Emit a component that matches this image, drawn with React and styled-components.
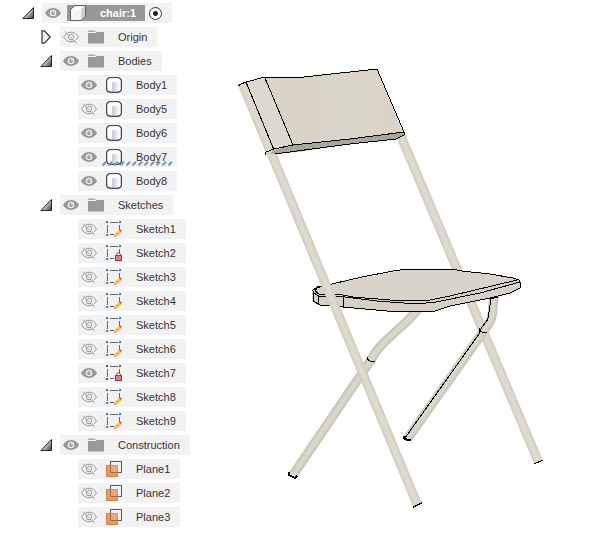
import React, { useState } from "react";
import styled, { createGlobalStyle } from "styled-components";

const GlobalStyle = createGlobalStyle`
  body {
    margin: 0;
    background: #fff;
    color: #333;
    font-family: "Liberation Sans", Arial, sans-serif;
    font-size: 11px;
  }
`;

const SWorkspace = styled.main`
  display: flex;
  align-items: flex-start;
`;

const SBrowser = styled.nav`
  flex: 0 0 200px;
  padding-top: 3px;
`;

const STree = styled.ul`
  list-style: none;
  margin: 0;
  padding: 0 0 0 ${({ $root }) => ($root ? "22px" : "18px")};
  display: flex;
  flex-direction: column;
  gap: 4px;
`;

const SNode = styled.li`
  display: flex;
  flex-direction: column;
  gap: 4px;
`;

const SLine = styled.div`
  display: flex;
  align-items: center;
  gap: 8px;
`;

const SIconButton = styled.button`
  display: flex;
  align-items: center;
  flex: none;
  width: ${({ $width }) => $width};
  padding: 0;
  border: none;
  background: none;
  cursor: pointer;
`;

const STwistySlot = styled.span`
  flex: none;
  width: 12px;
`;

const SRow = styled.div`
  position: relative;
  display: flex;
  align-items: center;
  height: 20px;
  padding: 0 10px 0 3px;
  background: #f2f2f2;

  svg {
    display: block;
  }
`;

const SItem = styled.span`
  display: flex;
  align-items: center;
  gap: 14px;
  margin-left: 9px;
  white-space: nowrap;
`;

const SActiveItem = styled(SItem)`
  height: 16px;
  margin-left: 6px;
  padding: 0 9px 0 3px;
  background: #989898;
  color: #fff;
  font-weight: bold;
`;

const SRadio = styled.input`
  appearance: none;
  width: 13px;
  height: 13px;
  margin: 0 0 0 4px;
  border: 1px solid #333;
  border-radius: 100%;
  background: #fff;

  &:checked {
    background: radial-gradient(circle, #222 0 2px, #fff 3px);
  }
`;

const SHatch = styled.svg`
  position: absolute;
  left: 24px;
  bottom: 1px;
`;

const SViewport = styled.svg`
  display: block;
  flex: 1;
  min-width: 0;
  height: auto;
`;

const TwistyIcon = ({ open }) => (
  <svg width="12" height="14" viewBox="0 0 12 14" aria-hidden="true">
    <defs>
      <linearGradient id="twisty" x1="0.3" y1="0.3" x2="1" y2="0.9">
        <stop offset="0" stopColor="#fff" />
        <stop offset="1" stopColor="#444" />
      </linearGradient>
    </defs>
    {open ? (
      <path d="M11.5 1.5V12.5H.8Z" fill="url(#twisty)" stroke="#222" />
    ) : (
      <path d="M2 .8H4.5L10.2 7L4.5 13.2H2Z" fill="#eee" stroke="#333" strokeWidth="1.2" />
    )}
  </svg>
);

const EyeIcon = ({ visible }) => (
  <svg width="16" height="14" viewBox="0 0 16 14" aria-hidden="true">
    {visible ? (
      <>
        <path d="M0 7C3.5 .3 12.5 .3 16 7C12.5 13.7 3.5 13.7 0 7Z" fill="#999" />
        <circle cx="8" cy="7" r="2.6" fill="#999" stroke="#f4f4f4" strokeWidth="1.3" />
        <circle cx="8.6" cy="6.4" r=".7" fill="#ddd" />
      </>
    ) : (
      <g fill="none" stroke="#999">
        <path d="M.6 7C4 .6 12 .6 15.4 7C12 13.4 4 13.4 .6 7Z" />
        <circle cx="8" cy="7" r="2.8" />
        <path d="M3 1.3L14.2 12.6" stroke="#f2f2f2" />
        <path d="M2 1.5L13.7 13.3" />
      </g>
    )}
  </svg>
);

const FolderIcon = () => (
  <svg width="16" height="14" viewBox="0 0 16 14" aria-hidden="true">
    <path d="M0 1.5Q0 .5 1 .5H6.5L8 2H0Z" fill="#aaa" />
    <path d="M0 3H7.5L9 2H16V13.5H0Z" fill="#999" />
  </svg>
);

const ComponentIcon = () => (
  <svg width="16" height="16" viewBox="0 0 16 16" aria-hidden="true">
    <path d="M.6 4.3L5 .6H15.4V11.3L11 15.4H.6Z" fill="#fff" stroke="#555" strokeLinejoin="round" />
    <path d="M11.2 4.3L14.8 1V11L11.2 14.8Z" fill="#c8ccd4" />
    <path d="M1.3 4.5H11V14.7H1.3Z" fill="#f5f6f8" />
  </svg>
);

const BodyIcon = () => (
  <svg width="16" height="16" viewBox="0 0 16 16" aria-hidden="true">
    <defs>
      <linearGradient id="body">
        <stop offset="0" stopColor="#fff" />
        <stop offset=".33" stopColor="#fff" />
        <stop offset=".36" stopColor="#c6cbd4" />
        <stop offset=".9" stopColor="#fff" />
      </linearGradient>
    </defs>
    <path d="M.6 3.8Q1.4 .6 5.5 .6H10.5Q14.6 .6 15.4 3.8V12.2Q14.6 15.4 10.5 15.4H5.5Q1.4 15.4 .6 12.2Z" fill="url(#body)" stroke="#414856" strokeWidth="1.3" />
    <path d="M1.4 3.7Q2.2 1.3 5.5 1.3H10.5Q13.8 1.3 14.6 3.7Q13.5 5 11 5H5Q2.5 5 1.4 3.7Z" fill="#fff" />
  </svg>
);

const SketchIcon = ({ locked, shown }) => (
  <svg width="16" height="16" viewBox="0 0 16 16" aria-hidden="true">
    <path d="M4 1.5H12M1.5 4V12M13.5 4V9M4 13.5H8" stroke="#666" fill="none" />
    <g fill={shown ? "#555" : "#1687e0"}>
      <rect x="0" y="0" width="2" height="2" />
      <rect x="13" y="0" width="2" height="2" />
      <rect x="0" y="13" width="2" height="2" />
    </g>
    {locked ? (
      <>
        <path d="M10.5 10.5V9.5Q10.5 7.9 12.5 7.9Q14.5 7.9 14.5 9.5V10.5" fill="none" stroke="#b63a40" />
        <rect x="9.5" y="10.5" width="6" height="5" fill="#d98286" stroke="#c02832" />
      </>
    ) : (
      <>
        <path d="M8 15.8L8.8 12.8L13 9L15.4 11.2L11 15.2Z" fill="#f9bd4e" />
        <path d="M13 9.2Q14 8 15.4 8.8Q16 10 15.2 11.3Z" fill="#ee4848" />
        <path d="M8 15.8L8.5 14.2L9.6 15.4Z" fill="#888" />
      </>
    )}
  </svg>
);

const PlaneIcon = () => (
  <svg width="16" height="16" viewBox="0 0 16 16" aria-hidden="true">
    <rect x=".5" y="4.5" width="11" height="11" fill="#e69a62" stroke="#d98548" />
    <path d="M4.5 4.5H11.5V11.5H4.5Z" fill="#e2ab85" />
    <path d="M4.5 4V.5H15.5V11.5H12" fill="none" stroke="#555" />
    <path d="M4.5 4.5V11.5H11.5" fill="none" stroke="#a86d48" />
  </svg>
);

const icons = {
  folder: FolderIcon,
  component: ComponentIcon,
  body: BodyIcon,
  sketch: SketchIcon,
  plane: PlaneIcon,
};

const hatchMarks = Array.from({ length: 12 }, (_, index) => index * 6);

const body = (name, visible = true, hatched = false) => ({ name, icon: "body", visible, hatched });
const sketch = (name, visible = false, locked = false) => ({ name, icon: "sketch", visible, locked });
const plane = (name) => ({ name, icon: "plane", visible: false });

const model = {
  name: "chair:1",
  icon: "component",
  visible: true,
  active: true,
  open: true,
  children: [
    { name: "Origin", icon: "folder", visible: false, open: false, children: [] },
    {
      name: "Bodies",
      icon: "folder",
      visible: true,
      open: true,
      children: [body("Body1"), body("Body5", false), body("Body6"), body("Body7", true, true), body("Body8")],
    },
    {
      name: "Sketches",
      icon: "folder",
      visible: true,
      open: true,
      children: [
        sketch("Sketch1"),
        sketch("Sketch2", false, true),
        sketch("Sketch3"),
        sketch("Sketch4"),
        sketch("Sketch5"),
        sketch("Sketch6"),
        sketch("Sketch7", true, true),
        sketch("Sketch8"),
        sketch("Sketch9"),
      ],
    },
    {
      name: "Construction",
      icon: "folder",
      visible: true,
      open: true,
      children: [plane("Plane1"), plane("Plane2"), plane("Plane3")],
    },
  ],
};

const TreeNode = ({ node }) => {
  const [open, setOpen] = useState(node.open);
  const [visible, setVisible] = useState(node.visible);
  const Icon = icons[node.icon];
  const Item = node.active ? SActiveItem : SItem;

  return (
    <SNode>
      <SLine>
        {node.children ? (
          <SIconButton
            type="button"
            $width="12px"
            aria-label={`Expand ${node.name}`}
            aria-expanded={open}
            onClick={() => setOpen(!open)}
          >
            <TwistyIcon open={open} />
          </SIconButton>
        ) : (
          <STwistySlot />
        )}
        <SRow>
          <SIconButton
            type="button"
            $width="16px"
            aria-label={`Show ${node.name}`}
            aria-pressed={visible}
            onClick={() => setVisible(!visible)}
          >
            <EyeIcon visible={visible} />
          </SIconButton>
          <Item>
            <Icon locked={node.locked} shown={visible} />
            {node.name}
          </Item>
          {node.active && <SRadio type="radio" name="active" aria-label={`Activate ${node.name}`} defaultChecked />}
          {node.hatched && (
            <SHatch width="72" height="5" viewBox="0 0 72 5" aria-hidden="true">
              {hatchMarks.map((x) => (
                <path key={x} d={`M${x + 0.5} 4.5L${x + 4} .8`} stroke="#7f92b6" strokeWidth="2" />
              ))}
            </SHatch>
          )}
        </SRow>
      </SLine>
      {open && node.children?.length > 0 && (
        <STree>
          {node.children.map((child) => (
            <TreeNode key={child.name} node={child} />
          ))}
        </STree>
      )}
    </SNode>
  );
};

// tubes are layered strokes, darkest at the rim and lightest in the middle
const Tube = ({ d, dark }) => (
  <g fill="none">
    <path d={d} stroke={dark ? "#c6c3b9" : "#ceccc1"} strokeWidth="9.4" />
    <path d={d} stroke={dark ? "#d0cdc2" : "#d8d5c9"} strokeWidth="7" />
    <path d={d} stroke={dark ? "#d9d6ca" : "#dedace"} strokeWidth="4" />
  </g>
);

const Chair = () => (
  <SViewport viewBox="200 0 412 548" role="img" aria-label="Folding chair model">
    <defs>
      <linearGradient id="backrest">
        <stop offset="0" stopColor="#dbd4c8" />
        <stop offset=".35" stopColor="#d9d4c6" />
        <stop offset=".6" stopColor="#dad6ca" />
        <stop offset="1" stopColor="#dad3c7" />
      </linearGradient>
    </defs>

    <Tube d="M400 134L538.5 462" />

    <Tube d="M418 309C405 327 380 341 371 360L293 475" dark />
    <Tube d="M495 295C491 305 495 315 489 323Q486 328 483 332L408 438" dark />

    <g fill="none" stroke="#000" shapeRendering="crispEdges">
      <path d="M498 297L490 299V305C488 314 490 317 486 322Q480 329 479 334L405 438" />
      <path d="M479 328Q480 333 487 333" />
      <path d="M367 357Q367 362 375 362" />
      <path d="M289 472L289 475L295 478L297 476" strokeWidth="2" />
      <path d="M404 436V438L407 440H411" strokeWidth="2" />
      <path d="M534 464L543 460" />
    </g>

    <path
      d="M312 292L317 287L332 284L393 272L408 269H452L462 271L513 278L518 279L520 282V289L510 294L450 306L435 311H387L343 307L320 305L312 301Z"
      fill="#d5d1c6"
    />
    <path
      d="M315 291L320 287L332 284L393 272L408 269H452L462 271L513 278L518 280L450 297L430 301L416 302L390 300L343 296L319 295Z"
      fill="#d9d4c9"
    />
    <g fill="none" stroke="#000" shapeRendering="crispEdges">
      <path d="M312 291L317 287L332 284L362 277L393 271L408 269H452L462 271L490 274L513 278L519 280L520 282V288L510 293L490 298L450 306L435 311H387L343 307L320 305L313 301V291" />
      <path d="M322 286L317 288L315 291L319 294L343 295L353 297L390 300H430L450 296L517 280" />
      <path d="M313 292L318 296L337 296L377 301L417 304L436 302L480 293L520 282" />
      <path d="M318 295V304M343 296V307" />
    </g>

    <Tube d="M242.5 84L417.5 505" />
    <path d="M413 507L422 503" stroke="#000" strokeWidth="1.5" shapeRendering="crispEdges" />

    <path d="M273 150L293 145L403 132L404 135L396 139L350 144L297 152L270 154Z" fill="#aaa79c" />
    <path d="M246 82L265 78L293 145L274 150Z" fill="#dcd9ce" />
    <path d="M265 78L304 77L377 69L403 132L293 145Z" fill="url(#backrest)" />
    <g fill="none" stroke="#000" shapeRendering="crispEdges">
      <path d="M238 86L241 84L246 82L265 77L304 77L377 69L404 132L350 139L293 145L274 149L266 152L265 155" />
      <path d="M246 82L274 150M265 78L293 145" />
      <path d="M275 154L297 151L350 144L396 139L404 135V132" />
    </g>
  </SViewport>
);

const App = () => (
  <>
    <GlobalStyle />
    <SWorkspace>
      <SBrowser aria-label="Browser">
        <STree $root>
          <TreeNode node={model} />
        </STree>
      </SBrowser>
      <Chair />
    </SWorkspace>
  </>
);

export default App;
